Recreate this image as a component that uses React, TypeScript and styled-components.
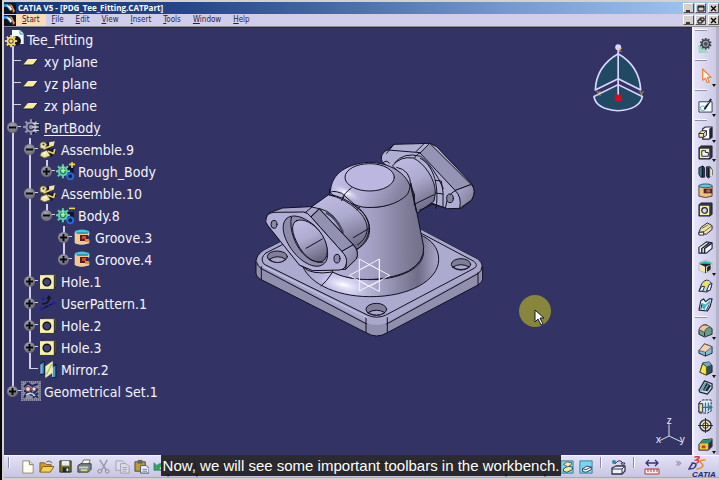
import React from "react";
import styled, { createGlobalStyle, css } from "styled-components";

const Global = createGlobalStyle`
  * { box-sizing: border-box; }
  html, body { margin: 0; height: 100%; overflow: hidden; }
  button { font: inherit; color: inherit; border: 0; padding: 0; background: none; }
`;

const Screen = styled.div`
  position: relative;
  display: flex;
  flex-direction: column;
  height: 100vh;
  border-left: 2px solid #050509;
  background: #d3d1e9;
  font-family: "DejaVu Sans Condensed", "DejaVu Sans", sans-serif;
`;

const AppWindow = styled.div`
  flex: 1;
  min-height: 0;
  display: flex;
  flex-direction: column;
  border: solid #d8d0ca;
  border-width: 2px 1px 2px 2px;
`;

const TitleBar = styled.header`
  display: flex;
  align-items: center;
  height: 12px;
  gap: 2px;
  background: linear-gradient(90deg, #153674 0%, #26458a 25%, #4368a5 45%, #789bd0 72%, #a5c9f2 100%);
  color: #fff;
  font-family: "Open Sans", "Noto Sans", sans-serif;
  font-size: 8px;
  font-weight: 700;
  line-height: 12px;
  h1 { flex: 1; margin: 0; font: inherit; white-space: nowrap; }
`;

const MenuBar = styled.nav`
  display: flex;
  align-items: center;
  height: 13px;
  border-bottom: 1px solid #8e8c93;
  background: #d0ceeb;
  color: #28243e;
  font-size: 8px;
  line-height: 12px;
`;

const MenuItem = styled.button<{ $active?: boolean }>`
  height: 12px;
  padding: 0 6px;
  background: ${(p) => (p.$active ? "#fbdcb4" : "transparent")};
  &::first-letter { text-decoration: underline; }
`;

const Controls = styled.div`
  display: flex;
  gap: 1px;
  margin-left: auto;
`;

const ControlButton = styled.button`
  display: grid;
  place-items: center;
  width: 11px;
  height: 10px;
  border: 1px solid;
  border-color: #fff #55534f #55534f #fff;
  background: #d5d1ca;
  &:last-child { margin-left: 1px; }
`;

const Work = styled.div`
  flex: 1;
  min-height: 0;
  display: flex;
`;

const Viewport = styled.main`
  position: relative;
  flex: 1;
  min-width: 0;
  overflow: hidden;
  background: #343365;
  border-top: 1px solid #29284f;
`;

const Tree = styled.ul`
  list-style: none;
  margin: 0;
  padding: 0;
  color: #f4f4fb;
  font-size: 14px;
  line-height: 22px;
`;

const TreeRow = styled.li`
  display: flex;
  align-items: center;
  height: 22px;
`;

type CellKind = "line" | "blank" | "tee" | "end";
const stem = "linear-gradient(#cfcde8, #cfcde8) 8px 0 / 2px";
const arm = "linear-gradient(#cfcde8, #cfcde8) 8px 10px / 9px 1px no-repeat";
const Cell = styled.span<{ $kind: CellKind }>`
  display: flex;
  align-items: center;
  width: 17px;
  height: 22px;
  ${(p) => p.$kind === "line" && css`background: ${stem} 100% no-repeat;`}
  ${(p) => p.$kind === "tee" && css`background: ${stem} 100% no-repeat, ${arm};`}
  ${(p) => p.$kind === "end" && css`background: ${stem} 50% no-repeat, ${arm};`}
`;

const Toggle = styled.button`
  display: grid;
  place-items: center;
  width: 11px;
  height: 11px;
  margin-left: 3px;
  border-radius: 50%;
  background: radial-gradient(circle at 45% 30%, #a3a3ae, #595963);
`;

const TreeIcon = styled.span`
  display: grid;
  place-items: center;
  width: 20px;
  margin-right: 3px;
`;

const Label = styled.span<{ $underline?: boolean }>`
  padding-top: 1px;
  white-space: nowrap;
  text-decoration: ${(p) => (p.$underline ? "underline" : "none")};
  text-underline-offset: 2px;
`;

const Floating = styled.svg<{ $x: string; $y: string }>`
  position: absolute;
  left: ${(p) => p.$x};
  top: ${(p) => p.$y};
  overflow: visible;
`;

const SideBar = styled.aside`
  display: flex;
  flex-direction: column;
  width: 27px;
  border-left: 2px solid #f7f6ff;
  border-right: 3px solid #b4b1c9;
  background: linear-gradient(90deg, #e6e4fa, #cdcae7);
`;

const SideGroup = styled.div<{ $tall?: boolean }>`
  display: flex;
  flex-direction: column;
  padding-top: ${(p) => (p.$tall ? "6px" : "7px")};
  background: linear-gradient(#fff, #fff) 1px 2px / 12px 1px no-repeat,
    linear-gradient(#918ea8, #918ea8) 1px 3px / 12px 1px no-repeat;
  button { height: ${(p) => (p.$tall ? "24px" : "19px")}; }
`;

const ToolButton = styled.button<{ $menu?: boolean }>`
  position: relative;
  display: grid;
  place-items: center;
  ${(p) => p.$menu && css`
    &::after {
      content: "";
      position: absolute;
      right: 0;
      bottom: 0;
      border: 2px solid transparent;
      border-top: 3px solid #111;
      border-bottom: 0;
    }
  `}
`;

const BottomBar = styled.footer`
  display: flex;
  align-items: center;
  height: 23px;
  padding-left: 1px;
  border-top: 1px solid #f7f6ff;
  border-bottom: 1px solid #a9a6bd;
  background: linear-gradient(#e3e1f7, #c8c5e1);
  button { width: 19px; height: 20px; }
`;

const Divider = styled.span<{ $wide?: boolean }>`
  width: 2px;
  height: 11px;
  margin: ${(p) => (p.$wide ? "0 7px 8px 5px" : "0 8px 8px 3px")};
  border-left: 1px solid #8d8aa5;
  border-right: 1px solid #fff;
`;

const MiddleTools = styled.div`
  display: flex;
  flex: 1;
  justify-content: space-around;
  min-width: 0;
  overflow: hidden;
`;

const More = styled.button`
  margin-left: 8px;
  color: #85829c;
  font-size: 12px;
  line-height: 12px;
  padding-bottom: 8px;
`;

const Caption = styled.div`
  position: absolute;
  inset: auto 0 4px 0;
  display: flex;
  justify-content: center;
  pointer-events: none;
  p {
    margin: 0;
    padding: 0 2px;
    background: rgba(28, 28, 31, 0.93);
    color: #fff;
    font: 15px/21px "Liberation Sans", Arial, sans-serif;
    white-space: nowrap;
  }
`;

const I = ({ children, size = 16 }: { children: React.ReactNode; size?: number }) => (
  <svg width={size} height={size} viewBox="0 0 16 16" strokeLinejoin="round" aria-hidden="true">{children}</svg>
);

const gearTeeth = (n: number) =>
  Array.from({ length: n }, (_, i) => <path key={i} d="M8 1V4" transform={`rotate(${(i * 360) / n} 8 8)`} />);

const Gear = ({ color, dark }: { color: string; dark: string }) => (
  <g stroke={color} strokeWidth="2" fill="none">
    {gearTeeth(8)}
    <circle cx="8" cy="8" r="4" fill={dark} />
    <circle cx="8" cy="8" r="1" />
  </g>
);

const AppIcon = () => (
  <svg width="12" height="11" viewBox="0 0 12 11" aria-hidden="true">
    <path fill="#10131f" d="M0 0h12v11H0z" />
    <path fill="#3a86c8" d="M0 1L4 1 8 5 6 8 3 4 0 4z" />
    <path fill="#ed8f43" d="M5 1L8 2 11 8 9 10 8 5z" />
    <path fill="#fff" d="M2 2L6 3 8 6 7 8 5 5z" />
  </svg>
);

const treeIcons: Record<string, React.ReactNode> = {
  root: (
    <svg width="20" height="22" viewBox="0 0 20 22" aria-hidden="true">
      <path d="M9 18V22" stroke="#cfcde8" strokeWidth="2" />
      <path d="M8 2H16L20 6V16H8Z" fill="#f4fcff" />
      <path d="M16 2V6H20V16" fill="none" stroke="#299ba5" />
      <circle cx="12" cy="13" r="5" fill="#141426" />
      <g transform="translate(0 6) scale(.88)"><Gear color="#f5dc76" dark="#514a27" /></g>
    </svg>
  ),
  plane: <I><path d="M5 6H15L10 12H0Z" fill="#f8ed9b" /><path d="M0 12H10L15 6" stroke="#18182c" fill="none" /></I>,
  part: <I size={18}><circle cx="10" cy="8" r="6" fill="#15152b" /><Gear color="#9092ad" dark="#292943" /><path d="M10 5H15M9 8H13M10 11H15" stroke="#d8d8e9" strokeWidth="1.2" /></I>,
  assemble: (
    <I size={18}>
      <path d="M4 4L8 2 11 5 9 9 4 8ZM8 9L13 7 15 11 11 15 6 13Z" fill="#17172c" />
      <path d="M1 3Q5 0 7 4L5 8 1 7ZM2 11L7 9 10 14 5 16 1 14Z" fill="#f0e4a8" stroke="#706527" strokeWidth=".7" />
      <path d="M9 2L14 1 13 5 9 6Z" fill="#f5e8a5" />
      <path d="M4 8L11 5M8 10L13 12 14 8" stroke="#e5cf70" strokeWidth="1.5" fill="none" />
      <circle cx="4" cy="4" r="1" fill="#49451e" /><circle cx="5" cy="12" r="1" fill="#fff" />
    </I>
  ),
  bodyPlus: (
    <I size={19}>
      <path d="M9 4H15V14H9Z" fill="#10142e" />
      <g transform="translate(-1 1) scale(.85)"><Gear color="#5bd1b0" dark="#146a86" /></g>
      <circle cx="12" cy="12" r="2.5" stroke="#2767df" strokeWidth="1.7" fill="#123" />
      <path d="M6 4V9M4 7H8" stroke="#d2ef73" />
      <path d="M11 2H16M13.5 0V5" stroke="#f5dc45" strokeWidth="1.3" />
    </I>
  ),
  bodyMinus: (
    <I size={19}>
      <path d="M9 5H15V14H9Z" fill="#10142e" />
      <g transform="translate(-1 1) scale(.85)"><Gear color="#5bd1b0" dark="#146a86" /></g>
      <circle cx="12" cy="12" r="2.5" stroke="#2767df" strokeWidth="1.7" fill="#123" />
      <path d="M6 4V9M4 7H8" stroke="#d2ef73" />
      <path d="M11 2H16" stroke="#f5dc45" strokeWidth="1.3" />
    </I>
  ),
  groove: (
    <I>
      <path d="M1 3Q8 0 15 3V6L13 7V10L15 11V14Q7 17 1 14Z" fill="#f4c891" stroke="#f2ddbb" strokeWidth=".6" />
      <path d="M6 6H14V12H6Z" fill="#49202c" /><path d="M8 7H12V10H8Z" fill="#ca4a36" />
      <path d="M1 2Q8-1 15 2V4Q8 6 1 4Z" fill="#44c8e4" /><path d="M3 4H14" stroke="#176f91" />
      <path d="M11 10H15V13H11Z" fill="#ed8c3b" />
    </I>
  ),
  hole: (
    <I size={17}>
      <path d="M1 3L4 0H16V12L13 15V3Z" fill="#47464d" stroke="#1d1c24" strokeWidth=".7" />
      <path d="M0 2H13V15H0Z" fill="#f8efa9" />
      <circle cx="6.5" cy="8.5" r="3.6" fill="#444272" stroke="#11121e" strokeWidth="1.3" />
    </I>
  ),
  pattern: (
    <I>
      <path d="M2 9Q9 9 9 3M7 4L9 1 11 4M4 13L12 9" fill="none" stroke="#10101e" strokeWidth="1.3" />
      <path d="M2 12l2 2-2 2-2-2ZM14 6l2 2-2 2-2-2ZM3 2l2 2-2 2-2-2ZM9 9l1 1-1 1-1-1Z" fill="#20209b" stroke="#1c22c7" strokeWidth=".6" />
    </I>
  ),
  mirror: (
    <I size={17}>
      <path d="M1 2L4 0V12L1 13ZM12 5L15 3V15L12 16Z" fill="#429cc5" stroke="#101a39" />
      <path d="M1 3V12M12 6V15" stroke="#c4f1ff" />
      <path d="M5 5L12 0V11L5 16Z" fill="#f3ecaa" /><path d="M6 13L11 3" stroke="#85be7b" />
    </I>
  ),
  set: (
    <svg width="20" height="20" viewBox="0 0 20 20" aria-hidden="true">
      <path fill="#8f8ba3" d="M0 0h20v20H0z" /><path d="M1 1H19V19H1Z" fill="none" stroke="#45425c" strokeDasharray="1 1" />
      <path d="M3 6L7 2 11 5 17 3M3 17L6 11 11 14 17 8M12 17L17 12M3 10H6M9 9L11 12M14 13L17 17" stroke="#202955" strokeWidth="2" fill="none" />
      <circle cx="7" cy="8" r="2.5" fill="#e0d2cf" stroke="#8b2839" /><circle cx="13" cy="8" r="2.2" fill="#e9e4ee" stroke="#4c2d48" />
      <path d="M5 14Q10 10 14 15" stroke="#c6dde6" strokeWidth="1.5" fill="none" />
    </svg>
  ),
};

type Node = { label: string; icon: string; cells: CellKind[]; toggle?: "+" | "-" };
const nodes: Node[] = [
  { label: "Tee_Fitting", icon: "root", cells: [] },
  { label: "xy plane", icon: "plane", cells: ["tee"] },
  { label: "yz plane", icon: "plane", cells: ["tee"] },
  { label: "zx plane", icon: "plane", cells: ["tee"] },
  { label: "PartBody", icon: "part", cells: ["tee"], toggle: "-" },
  { label: "Assemble.9", icon: "assemble", cells: ["line", "tee"], toggle: "-" },
  { label: "Rough_Body", icon: "bodyPlus", cells: ["line", "line", "end"], toggle: "+" },
  { label: "Assemble.10", icon: "assemble", cells: ["line", "tee"], toggle: "-" },
  { label: "Body.8", icon: "bodyMinus", cells: ["line", "line", "end"], toggle: "-" },
  { label: "Groove.3", icon: "groove", cells: ["line", "line", "blank", "tee"], toggle: "+" },
  { label: "Groove.4", icon: "groove", cells: ["line", "line", "blank", "end"], toggle: "+" },
  { label: "Hole.1", icon: "hole", cells: ["line", "tee"], toggle: "+" },
  { label: "UserPattern.1", icon: "pattern", cells: ["line", "tee"], toggle: "+" },
  { label: "Hole.2", icon: "hole", cells: ["line", "tee"], toggle: "+" },
  { label: "Hole.3", icon: "hole", cells: ["line", "tee"], toggle: "+" },
  { label: "Mirror.2", icon: "mirror", cells: ["line", "end"] },
  { label: "Geometrical Set.1", icon: "set", cells: ["end"], toggle: "+" },
];

const navy = "#20213d";
type Tool = { name: string; menu?: boolean; art: React.ReactNode };

const topTools: Tool[] = [
  { name: "Workbench", art: <><path d="M0 7L12 16H1Z" fill="#9bd8c6" /><g transform="translate(1 -1) scale(.9)" stroke="#40464d" fill="none" strokeWidth="2">{gearTeeth(10)}<circle cx="8" cy="8" r="4.5" fill="#aeb3bb" /><circle cx="8" cy="8" r="2" fill="#565963" strokeWidth="1" /></g></> },
  { name: "Select", menu: true, art: <path d="M5 1V13L8 11 10 16 12 15 10 10H14Z" fill="#fff6ef" stroke="#eb8740" strokeWidth="1.4" /> },
  { name: "Sketcher", menu: true, art: <><path d="M1 4H15V15H1Z" fill="#f4fbff" stroke="#33384a" /><circle cx="5" cy="11" r="2.5" fill="none" stroke="#65a9ac" /><path d="M14 1L7 12" stroke="#20232f" strokeWidth="2" /><path d="M8 8l4-4" stroke="#8ecbd5" /></> },
];

const featureTools: Tool[] = [
  { name: "Pad", menu: true, art: <><path d="M5 3L8 1H15V12L12 14H5Z" fill="#fff" stroke={navy} strokeWidth="1.2" /><path d="M12 3V14L15 12V1Z" fill={navy} /><path d="M1 8L4 5H9V10L6 12H1Z" fill="#f7eaaa" stroke={navy} /><path d="M1 8H6V12M6 8L9 5" stroke={navy} fill="none" /></> },
  { name: "Pocket", menu: true, art: <><path d="M1 3L3 1H15V13L13 15H1Z" fill="#303047" stroke={navy} /><path d="M2 4H12V14H2Z" fill="#f5efaf" /><path d="M4 6H8V8H11V12H4Z" fill="#eef4f6" stroke={navy} /></> },
  { name: "Shaft", art: <><path d="M1 4L5 2 7 4V14L3 14 1 11ZM9 3L13 3 15 6V12L11 15 9 13Z" fill="#397b89" stroke={navy} /><path d="M5 2V14M11 4V14" stroke="#15162b" strokeWidth="2" /><path d="M13 4L15 6V12L13 14Z" fill="#f5e6a2" /></> },
  { name: "Groove", art: <><path d="M1 3Q8 0 15 3V14Q8 17 1 14Z" fill="#eec17f" stroke="#523b3b" /><path d="M6 6H15V11H6Z" fill="#4c2631" /><path d="M9 7H13V10H9Z" fill="#d75b3d" /><ellipse cx="8" cy="3" rx="7" ry="2" fill="#65c9de" stroke="#31567a" /></> },
  { name: "Hole", art: <><path d="M1 3L3 1H15V13L13 15H1Z" fill="#353541" stroke={navy} /><path d="M2 4H12V14H2Z" fill="#f7efae" /><circle cx="7" cy="9" r="3" fill="#d7d9e8" stroke={navy} strokeWidth="1.3" /></> },
  { name: "Rib", art: <><path d="M1 12L3 7 10 2 15 5V9L9 14 1 14Z" fill="#eee1a2" stroke={navy} /><path d="M2 12L7 11 15 5M4 8L11 4" stroke="#6d694e" fill="none" /><path d="M1 12H6V15H1Z" fill="#fff" stroke={navy} /></> },
  { name: "Slot", art: <><path d="M1 8L9 2 15 3V9L9 14H1Z" fill="#eef8fa" stroke={navy} strokeWidth="1.2" /><path d="M4 14V9L12 3M7 14V9L15 3" stroke={navy} strokeWidth="1.5" fill="none" /><path d="M1 8H4L11 2" fill="#efe6a2" /></> },
  { name: "Advanced extruded features", menu: true, art: <><path d="M1 4L8 1 15 4V12L8 15 1 12Z" fill="#eee7b2" stroke="#b7b8c1" /><path d="M2 4L8 2 14 4 8 7Z" fill="#25c2c0" /><path d="M8 8V15M2 5L8 8 14 5M10 9L13 7V11L10 13Z" stroke={navy} fill={navy} /></> },
  { name: "Multi-sections solid", art: <><path d="M1 14L4 6Q9-1 14 5V10L10 15Z" fill="#b4d9d8" stroke={navy} /><path d="M5 7Q8 1 13 4Q10 5 9 10L4 11Z" fill="#f4e14d" /><path d="M1 14L4 9H7L5 14ZM9 14L12 7 15 6 13 13Z" fill="#f5fbff" stroke={navy} /></> },
  { name: "Removed multi-sections solid", art: <><path d="M1 14L3 4L6 2L8 5L12 2H15L13 10L10 15Z" fill="#eafaff" stroke={navy} strokeWidth="1.2" /><path d="M4 6L8 8 13 3V7Q8 9 7 14L3 10Z" fill="#46b7c4" /><path d="M4 8L3 13M12 8L9 14" stroke={navy} fill="none" /></> },
];

const dressTools: Tool[] = [
  { name: "Edge fillet", menu: true, art: <><path d="M1 8Q3 1 9 2L15 6V12L7 15 1 12Z" fill="#63a084" stroke={navy} /><path d="M1 7Q4 0 11 3L14 5Q8 4 7 10Z" fill="#eec49e" stroke="#5e5150" /><path d="M7 10V14" stroke={navy} /></> },
  { name: "Chamfer", art: <><path d="M1 9L7 2 15 5V12L8 15 1 12Z" fill="#7fc0d5" stroke={navy} /><path d="M1 9L7 2 15 5 8 11Z" fill="#f0cfad" stroke="#6a5c5a" /><path d="M8 11V15" stroke={navy} /></> },
  { name: "Draft angle", menu: true, art: <><path d="M2 12L5 2 12 1 15 5V12L9 15Z" fill="#31515a" stroke={navy} /><path d="M5 2L12 1 14 4 9 6Z" fill="#6cabc2" /><path d="M5 3L9 6V15L2 12Z" fill="#f7e63b" stroke="#555329" /></> },
  { name: "Shell", art: <><path d="M1 11L7 1 15 4V9L10 15 2 13Z" fill="#bbdce0" stroke={navy} strokeWidth="1.3" /><path d="M5 11L9 3 14 6 10 12Z" fill="#26243b" /><path d="M7 11L11 5M3 12L8 3" stroke="#589da6" strokeWidth="1.5" /></> },
  { name: "Thickness", art: <><path d="M1 4L5 1H14V13L10 15H1Z" fill="#dcecf1" stroke={navy} strokeDasharray="3 1" /><path d="M1 5H5V14H1Z" fill="#eee2a0" stroke={navy} /><path d="M8 4V14M11 4V13M4 9H15M12 7L15 9 12 11" fill="none" stroke="#34729a" strokeWidth="1.3" /></> },
  { name: "Thread", art: <><circle cx="8" cy="8" r="6" fill="#efe8b3" stroke={navy} strokeWidth="1.4" /><circle cx="8" cy="8" r="3" fill="none" stroke={navy} /><path d="M8 0V16M0 8H16" stroke={navy} /></> },
  { name: "Remove face", menu: true, art: <><path d="M1 8L5 3 15 2V10L11 14H1Z" fill="#ebca34" stroke={navy} /><path d="M2 7L6 3 15 3 11 7Z" fill="#348d73" /><path d="M11 7V14L15 10V3Z" fill="#263046" /><path d="M4 9H8V12H4Z" fill="#d5372c" /></> },
];

const fileTools: Tool[] = [
  { name: "New", art: <><path d="M3 2H10L14 6V15H3Z" fill="#fffef0" stroke="#8e8b7d" /><path d="M10 2V6H14" fill="#ddd9bf" stroke="#777" /></> },
  { name: "Open", art: <><path d="M1 14V4H6L8 6H13V8" fill="#d29c27" stroke="#80601c" /><path d="M1 14L4 8H16L12 14Z" fill="#f7cf54" stroke="#80601c" /><path d="M8 3Q11 1 14 4" fill="none" stroke="#645b35" /></> },
  { name: "Save", art: <><path d="M2 2H14V14H2Z" fill="#77752c" stroke="#242820" /><path d="M4 2H12V7H4Z" fill="#e8eef0" /><path d="M5 9H12V14H5Z" fill="#222630" /><path d="M9 10H11V13H9Z" fill="#eee" /></> },
  { name: "Print", art: <><path d="M4 7L7 1H14L12 7" fill="#faf9ed" stroke="#666" /><path d="M1 7L4 5H15V11L12 14H1Z" fill="#778185" stroke="#343d42" /><path d="M2 8H12V10H2Z" fill="#c5ced0" /><path d="M4 11H11V13H4Z" fill="#e2d878" /></> },
  { name: "Cut", art: <><path d="M4 1L11 12M12 1L6 12" stroke="#9997a5" strokeWidth="1.5" /><circle cx="4" cy="13" r="2" fill="none" stroke="#88869a" /><circle cx="12" cy="13" r="2" fill="none" stroke="#88869a" /></> },
  { name: "Copy", art: <g fill="#dfddeb" stroke="#a09eac"><path d="M1 2H8L10 4V12H1Z" /><path d="M6 5H12L15 8V15H6Z" /><path d="M8 9H13M8 11H13M8 13H12" /></g> },
  { name: "Paste", art: <><path d="M1 3H12V13H1Z" fill="#c09b3d" stroke="#504627" /><path d="M4 1H9V5H4Z" fill="#636466" /><path d="M7 7H13L16 10V15H7Z" fill="#eff1fa" stroke="#43516e" /><path d="M9 11H14M9 13H14" stroke="#637ca4" /></> },
  { name: "Undo", menu: true, art: <path d="M1 4V12H9L6 10Q9 6 13 8Q9 2 4 7Z" fill="#38a267" stroke="#207044" strokeWidth=".6" /> },
];

const viewTools: Tool[] = [
  { name: "Redo", menu: true, art: <path d="M15 5V12H8L10 10Q7 6 2 8Q6 3 12 8Z" fill="#38a267" /> },
  { name: "What's this", art: <path d="M2 2V12L5 9 7 14 9 13 7 8H11Z" fill="#333" /> },
  { name: "Fly mode", art: <path d="M1 10L15 4 10 13 8 10Z" fill="#445" /> },
  { name: "Fit all in", art: <path d="M8 1V15M1 8H15M8 1L6 4H10ZM1 8L4 6V10ZM15 8L12 6V10ZM8 15L6 12H10Z" fill="#d6c23a" stroke="#8d8020" /> },
  { name: "Pan", art: <path d="M8 1V15M1 8H15" stroke="#373b80" strokeWidth="2" /> },
  { name: "Rotate", art: <path d="M3 11Q1 3 8 3Q15 4 12 12" fill="none" stroke="#373b80" strokeWidth="2" /> },
  { name: "Zoom in", art: <><circle cx="7" cy="7" r="5" fill="none" stroke="#373b80" strokeWidth="2" /><path d="M11 11L15 15" stroke="#373b80" strokeWidth="2" /></> },
  { name: "Normal view", art: <path d="M2 13L8 4 14 8 9 14Z" fill="#3fa4bc" /> },
  { name: "Isometric view", menu: true, art: <path d="M2 4H14V13H2Z" fill="#3fa4bc" /> },
  { name: "Shading", menu: true, art: <circle cx="8" cy="8" r="5" fill="#777" /> },
];

const ViewIcon = ({ alt }: { alt?: boolean }) => (
  <I size={14}><path d="M1 1H15V15H1Z" fill="#79d6ee" stroke="#357894" /><path d="M4 10L9 7 14 8V11L8 14 4 13Z" fill={alt ? "#f6fbff" : "#f2e8a5"} stroke="#213953" />{alt ? <path d="M4 10L8 11 14 8" stroke="#213953" fill="none" /> : <path d="M4 5L8 2 13 3V5L9 8Z" fill="#f2e8a5" stroke="#455247" />}</I>
);

const ToolList = ({ items }: { items: Tool[] }) => (
  <>{items.map((t) => <ToolButton key={t.name} $menu={t.menu} aria-label={t.name}><I size={15}>{t.art}</I></ToolButton>)}</>
);

const WindowControls = ({ restore }: { restore?: boolean }) => (
  <Controls>
    <ControlButton aria-label="Minimize"><svg width="7" height="7"><path d="M1 6H5" stroke="#000" strokeWidth="1.5" /></svg></ControlButton>
    <ControlButton aria-label={restore ? "Restore" : "Maximize"}>
      <svg width="8" height="7" fill="none" stroke="#000">{restore ? <><path d="M3 3V1H7V4H5" /><path d="M1 3H5V6H1Z" /></> : <path d="M1 1H7V6H1ZM1 2H7" />}</svg>
    </ControlButton>
    <ControlButton aria-label="Close"><svg width="7" height="7"><path d="M1 1L6 6M6 1L1 6" stroke="#000" strokeWidth="1.3" /></svg></ControlButton>
  </Controls>
);

const Model = () => (
  <Floating $x="34.3%" $y="102px" width="250" height="215" viewBox="0 0 750 645" role="img" aria-label="Tee fitting model">
    <defs>
      <linearGradient id="side"><stop offset="0" stopColor="#b7b3dd" /><stop offset=".45" stopColor="#a3a0c4" /><stop offset=".8" stopColor="#807e9a" /><stop offset="1" stopColor="#716f89" /></linearGradient>
      <linearGradient id="dome" x1="0" y1="0" x2="1" y2=".35"><stop offset="0" stopColor="#c5c1eb" /><stop offset=".6" stopColor="#b1add4" /><stop offset="1" stopColor="#8583a0" /></linearGradient>
      <linearGradient id="pipe" x1=".2" y1="0" x2=".6" y2="1"><stop offset="0" stopColor="#bebae3" /><stop offset=".45" stopColor="#aeabd0" /><stop offset="1" stopColor="#6b6982" /></linearGradient>
      <linearGradient id="edge" x1="0" y1="0" x2="1" y2="1"><stop offset="0" stopColor="#b1aed4" /><stop offset="1" stopColor="#777590" /></linearGradient>
      <linearGradient id="skirt"><stop offset="0" stopColor="#a4a1c6" /><stop offset=".2" stopColor="#c2bee8" /><stop offset=".35" stopColor="#d3d0f1" /><stop offset=".55" stopColor="#aaa7cb" /><stop offset=".85" stopColor="#6f6d87" /><stop offset="1" stopColor="#aaa7cb" /></linearGradient>
      <radialGradient id="shine"><stop offset="0" stopColor="#fff" /><stop offset="1" stopColor="#d2cff0" stopOpacity="0" /></radialGradient>
    </defs>
    <g stroke="#111120" strokeWidth="3" strokeLinejoin="round" strokeLinecap="round" fill="none">
      <path fill="#918fae" d="M70 362L380 205L540 298L712 388Q728 397 728 412V447Q727 457 714 465L442 608Q410 628 378 608L60 447Q48 440 48 430V392Q49 375 70 362Z" />
      <path fill="#aaa7cc" stroke="none" d="M70 362L380 205L540 298L712 388Q733 405 716 425L440 578Q410 592 380 578L58 408Q44 380 70 362Z" />
      <path fill="#adaacf" d="M78 369L380 215L540 308L700 393Q716 404 704 414L436 556Q410 567 384 556L73 403Q57 385 78 369Z" />
      <path d="M50 398Q54 410 64 416L380 582M440 582L714 431Q726 423 726 410M378 563V608M442 563V608M64 410V447M714 428V464" />
      <path d="M72 410L384 564" stroke="#cbc8e9" />
      <g fill="#807e9b">
        <ellipse cx="112" cy="380" rx="30" ry="17" /><ellipse cx="663" cy="403" rx="29" ry="17" /><ellipse cx="409" cy="538" rx="31" ry="18" />
        <path fill="#aaa7cb" d="M88 388Q112 372 138 388Q112 408 88 388ZM638 411Q663 397 688 411Q663 427 638 411ZM384 548Q409 533 435 548Q409 563 384 548Z" />
      </g>
      <path fill="url(#skirt)" d="M185 400C200 455 280 499 388 500C510 501 596 450 596 388C596 352 572 328 540 314L240 350Z" />
      <ellipse cx="310" cy="464" rx="75" ry="25" transform="rotate(14 310 464)" fill="url(#shine)" stroke="none" />
      <path d="M190 412Q215 436 278 426Q260 455 243 468M278 426Q325 449 390 449C480 449 551 415 551 365" />

      <path fill="#b1aed4" d="M424 82Q425 67 444 59L462 43L570 40L590 50L696 162Q708 185 696 209L664 235L622 236L570 218L438 105Q422 96 424 82Z" />
      <path fill="#9694b5" d="M570 41L694 164L646 182L541 70Z" />
      <path fill="url(#edge)" d="M694 164Q711 180 695 210L659 235Q666 200 646 182Z" />
      <path d="M444 60L541 68M462 43L440 70M528 65L551 42M541 68Q520 77 522 95M646 182Q622 190 616 235M464 98Q492 65 542 79Q581 109 610 176" />
      <ellipse cx="630" cy="205" rx="10" ry="13" fill="#87849e" /><path d="M430 98Q438 88 448 99" />
      <path fill="url(#pipe)" d="M458 107Q480 78 520 84C552 99 587 147 586 189L582 213L532 250L495 145Z" />
      <path d="M541 85C573 100 600 154 588 235M586 151L604 153L609 187L609 232M586 189L609 192M523 223L582 194M538 241L580 222L609 232" />

      <path fill="url(#side)" d="M269 190L272 175L304 194C350 243 455 250 505 180L513 160L551 350Q554 395 505 423C430 458 330 455 278 426Z" />
      <path fill="url(#dome)" d="M272 178C276 133 318 101 386 97C450 97 501 132 510 170Q507 193 491 203C459 229 405 236 366 231L304 212L270 188Z" />
      <ellipse cx="318" cy="188" rx="48" ry="16" fill="url(#shine)" stroke="none" transform="rotate(24 318 188)" />
      <ellipse cx="389" cy="142" rx="74" ry="41" fill="#bbb7e1" />
      <path d="M470 112Q512 120 512 167L529 245M512 167L523 192V225M304 211Q313 188 334 174" />

      <path fill="url(#pipe)" d="M207 236L266 194Q310 198 348 231C397 263 402 318 351 359L307 365L224 268Z" />
      <path d="M266 194Q270 176 305 190L350 229C402 270 402 331 350 358M268 195Q315 205 351 239C391 275 392 318 353 344M240 236Q287 246 309 308M269 190V178M305 212L312 199M350 239L360 231M340 323L389 294" />
      <path d="M260 249Q290 265 308 305" strokeWidth="7" stroke="#494760" />
      <path fill="#aaa7cc" d="M79 263Q80 250 97 245L128 234L210 230L238 236L341 345Q357 362 350 385L317 418L218 421L181 407L83 286Q73 276 79 263Z" />
      <path fill="#9391b1" d="M238 237L340 345L306 365L213 261Z" />
      <path fill="url(#edge)" d="M340 345Q359 365 349 387L317 418Q324 383 306 365Z" />
      <path d="M90 250L197 247L213 261M197 247L216 231M213 261L238 237" />
      <path fill="#b2aed5" d="M79 263Q82 249 102 247L190 246Q203 247 213 261L306 365Q323 382 319 400Q316 419 298 420L218 422L178 405L83 286Q73 276 79 263Z" />
      <path fill="#8d8aab" d="M139 266C158 249 190 260 219 283C257 315 275 379 254 399C233 422 187 402 157 361C132 328 119 286 139 266Z" />
      <path fill="url(#pipe)" d="M170 272C193 263 221 283 238 303C265 337 269 377 251 391C230 405 196 386 174 344C155 309 151 281 170 272Z" />
      <path d="M154 262C146 296 166 354 199 380Q221 399 249 397M198 355L247 327" />
      <ellipse cx="102" cy="283" rx="9" ry="12" fill="#8a87a8" /><ellipse cx="291" cy="386" rx="9" ry="13" fill="#8a87a8" />
    </g>
    <g stroke="#f3f1ff" strokeWidth="3" fill="none">
      <path d="M358 387V483L418 452V387L358 420M358 387L418 420M358 452L418 485V387M328 436L388 404L449 436L388 470Z" />
    </g>
  </Floating>
);

const Compass = () => (
  <Floating $x="85.6%" $y="15px" width="53" height="70" viewBox="40 125 160 210" role="img" aria-label="Compass">
    <g fill="#204a64" stroke="#dcd5ff" strokeWidth="5" strokeLinejoin="round">
      <path d="M116 157Q50 195 47 266L116 232L184 266Q180 194 116 157Z" />
      <path d="M116 250L43 286Q49 324 116 329Q181 324 189 286Z" /><path d="M116 137V285" />
    </g>
    <circle cx="116" cy="137" r="9" fill="#dcd5ff" /><path d="M106 280h20v20h-20z" fill="#d90b19" />
    <g fill="#d5be42" fontFamily="Liberation Sans, sans-serif" fontSize="22"><text x="49" y="283">X</text><text x="179" y="283">Y</text><text x="116" y="153">z</text></g>
  </Floating>
);

const Axis = () => (
  <Floating $x="94.6%" $y="389px" width="32" height="30" viewBox="525 50 96 90" role="img" aria-label="Axis">
    <path d="M567 72V107L539 121M567 107L605 125" stroke="#dddced" strokeWidth="3" fill="none" />
    <g fill="#f0eff8" fontFamily="Liberation Sans, sans-serif" fontSize="30"><text x="560" y="71">z</text><text x="528" y="128">x</text><text x="599" y="128">y</text></g>
  </Floating>
);

const Pointer = () => (
  <Floating $x="74.7%" $y="267px" width="34" height="34" viewBox="0 0 34 34" aria-hidden="true">
    <circle cx="17" cy="16" r="16" fill="#88853d" /><path d="M17 15V27L20 24L23 30L25 29L22 23H26Z" fill="#fff" stroke="#171727" />
  </Floating>
);

const Logo = () => (
  <svg width="31" height="22" viewBox="0 0 31 22" role="img" aria-label="DS CATIA">
    <g fill="none" strokeWidth="1.5" strokeLinecap="round">
      <path d="M7 1Q12 0 11 2L8 4Q13 4 9 7" stroke="#d63d43" />
      <path d="M4 7Q10 7 7 11Q6 13 1 13L4 8" stroke="#373a86" />
      <path d="M17 4Q12 4 12 6L15 9Q15 12 9 13" stroke="#e38c32" />
    </g>
    <text x="4" y="21" fill="#25246f" fontFamily="Liberation Sans, sans-serif" fontSize="8" fontStyle="italic" fontWeight="700">CATIA</text>
  </svg>
);

export default function App() {
  return (
    <Screen>
      <Global />
      <AppWindow>
        <TitleBar><AppIcon /><h1>CATIA V5 - [PDG_Tee_Fitting.CATPart]</h1><WindowControls /></TitleBar>
        <MenuBar>
          <AppIcon />
          {["Start", "File", "Edit", "View", "Insert", "Tools", "Window", "Help"].map((m) => <MenuItem key={m} $active={m === "Start"}>{m}</MenuItem>)}
          <WindowControls restore />
        </MenuBar>
        <Work>
          <Viewport>
            <Tree>
              {nodes.map((n) => (
                <TreeRow key={n.label}>
                  {n.cells.map((kind, i) => (
                    <Cell key={i} $kind={kind}>
                      {n.toggle && i === n.cells.length - 1 && (
                        <Toggle aria-label={`Toggle ${n.label}`}>
                          <svg width="9" height="9"><path d={n.toggle === "+" ? "M1 4.5H8M4.5 1V8" : "M1 4.5H8"} stroke="#08080c" strokeWidth="2" /></svg>
                        </Toggle>
                      )}
                    </Cell>
                  ))}
                  <TreeIcon>{treeIcons[n.icon]}</TreeIcon>
                  <Label $underline={n.label === "PartBody"}>{n.label}</Label>
                </TreeRow>
              ))}
            </Tree>
            <Model /><Compass /><Axis /><Pointer />
          </Viewport>
          <SideBar>
            {topTools.map((t) => <SideGroup key={t.name} $tall><ToolList items={[t]} /></SideGroup>)}
            <SideGroup><ToolList items={featureTools} /></SideGroup>
            <SideGroup><ToolList items={dressTools} /></SideGroup>
          </SideBar>
        </Work>
        <BottomBar>
          <Divider />
          <ToolList items={fileTools} />
          <MiddleTools><ToolList items={viewTools} /></MiddleTools>
          <ToolButton aria-label="Hide or show"><ViewIcon /></ToolButton>
          <ToolButton aria-label="Swap visible space"><ViewIcon alt /></ToolButton>
          <Divider $wide />
          <ToolButton aria-label="Catalog"><I><path d="M1 9L5 7H14V12L11 15H1Z" fill="#eef0f8" stroke="#30324a" strokeWidth="1.3" /><path d="M1 10H11V15M11 10L14 7M4 5Q8-1 12 4M10 4H14L12 7Z" fill="none" stroke="#303458" /><circle cx="3" cy="3" r="2" fill="#2c82bd" /></I></ToolButton>
          <Divider $wide />
          <ToolButton aria-label="Measure between"><I><path d="M2 4H14M5 1L2 4 5 7M11 1L14 4 11 7" fill="none" stroke="#34377b" strokeWidth="1.4" /><path d="M1 10H15V15H1Z" fill="#fff2ea" stroke="#ad3941" /><path d="M4 10V13M7 10V13M10 10V13M13 10V13" stroke="#ad3941" /></I></ToolButton>
          <More aria-label="More tools">»</More>
          <Logo />
        </BottomBar>
      </AppWindow>
      <Caption><p>Now, we will see some important toolbars in the workbench.</p></Caption>
    </Screen>
  );
}
